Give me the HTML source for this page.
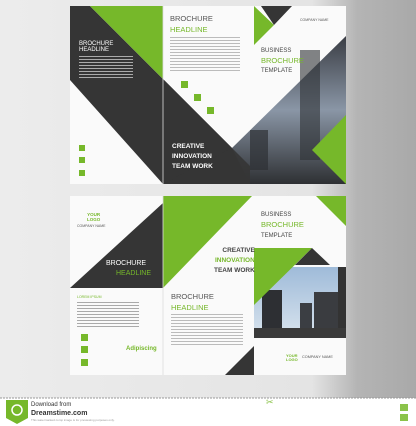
<!DOCTYPE html><html><head><style>
body{margin:0;width:416px;height:426px;overflow:hidden;background:linear-gradient(90deg,#ececec 0%,#e4e4e4 75%,#b4b4b4 86%,#a9a9a9 100%);font-family:"Liberation Sans",sans-serif;position:relative}
.t{position:absolute;white-space:nowrap;line-height:1}
.ln{position:absolute;height:1.5px;background:#bbb}
</style></head><body>
<svg width="416" height="426" style="position:absolute;left:0;top:0">
<defs>
<linearGradient id="ph" x1="0" y1="0" x2="0" y2="1"><stop offset="0" stop-color="#3a3d44"/><stop offset=".5" stop-color="#8a96a6"/><stop offset="1" stop-color="#2e3033"/></linearGradient>
<linearGradient id="sky" x1="0" y1="0" x2="0" y2="1"><stop offset="0" stop-color="#9fbbd9"/><stop offset="1" stop-color="#d9e4ee"/></linearGradient>
</defs>
<!-- top brochure -->
<rect x="70" y="6" width="276" height="178" fill="#fafafa"/>
<polygon points="70,6 90,6 163,79 250,166 250,184 163,184 70,80" fill="#353535"/>
<polygon points="90,6 163,6 163,79" fill="#76b82a"/>
<polygon points="163,79 250,166 250,184 163,184" fill="#353535"/>
<polygon points="346,36 232,148 250,184 346,184" fill="url(#ph)"/>
<rect x="300" y="50" width="20" height="110" fill="#2f3236" opacity=".6"/>
<rect x="250" y="130" width="18" height="40" fill="#2d3034" opacity=".7"/>
<polygon points="312,150 346,115 346,184" fill="#76b82a"/>
<polygon points="232,148 250,166 250,184 163,184" fill="#353535" opacity=".9"/>
<polygon points="254,6 254,45 274,25" fill="#76b82a"/>
<polygon points="261,6 292,6 274,25" fill="#353535"/>
<line x1="163" y1="6" x2="163" y2="184" stroke="#ddd" stroke-width=".8"/>
<!-- bottom brochure -->
<rect x="70" y="196" width="276" height="179" fill="#fafafa"/>
<polygon points="163,203 163,288 70,288" fill="#353535"/>
<polygon points="163,196 252,196 163,288" fill="#76b82a"/>
<polygon points="225,375 254,346 254,375" fill="#353535"/>
<polygon points="316,196 346,196 346,226" fill="#76b82a"/>
<rect x="254" y="267" width="92" height="71" fill="url(#sky)"/>
<rect x="262" y="290" width="20" height="48" fill="#2d2f33"/>
<rect x="300" y="303" width="12" height="35" fill="#3b3e43"/>
<rect x="314" y="292" width="24" height="46" fill="#3a3c40"/>
<rect x="338" y="267" width="8" height="71" fill="#333"/>
<rect x="254" y="328" width="92" height="10" fill="#3a3a3a"/>
<polygon points="254,248 312,248 254,305" fill="#76b82a"/>
<polygon points="295,265 312,248 330,265" fill="#353535"/>
<line x1="163" y1="196" x2="163" y2="375" stroke="#ddd" stroke-width=".8"/>
<!-- footer -->
<rect x="0" y="398" width="416" height="28" fill="#fff"/>
<line x1="0" y1="398" x2="416" y2="398" stroke="#999" stroke-dasharray="2,1"/>
<polygon points="6,400 28,400 28,418 17,424 6,418" fill="#76b82a"/>
<circle cx="17" cy="410" r="5" fill="none" stroke="#fff" stroke-width="1.5"/>
<rect x="400" y="404" width="8" height="7" fill="#8bc34a"/>
<rect x="400" y="414" width="8" height="7" fill="#8bc34a"/>
</svg>
<!-- top texts -->
<div class="t" style="left:79px;top:41px;font-size:6px;color:#fff">BROCHURE<br>HEADLINE</div>
<div style="position:absolute;left:79px;top:56px;width:54px;height:24px;background:repeating-linear-gradient(#aaa 0 1px,transparent 1px 3px)"></div>
<div class="t" style="left:170px;top:15px;font-size:7.5px;color:#555">BROCHURE</div>
<div class="t" style="left:170px;top:26px;font-size:7.5px;color:#76b82a">HEADLINE</div>
<div style="position:absolute;left:170px;top:37px;width:70px;height:36px;background:repeating-linear-gradient(#bbb 0 1px,transparent 1px 3px)"></div>
<div style="position:absolute;left:181px;top:81px;width:7px;height:7px;background:#76b82a"></div>
<div style="position:absolute;left:194px;top:94px;width:7px;height:7px;background:#76b82a"></div>
<div style="position:absolute;left:207px;top:107px;width:7px;height:7px;background:#76b82a"></div>
<div style="position:absolute;left:79px;top:145px;width:6px;height:6px;background:#76b82a"></div>
<div style="position:absolute;left:79px;top:157px;width:6px;height:6px;background:#76b82a"></div>
<div style="position:absolute;left:79px;top:170px;width:6px;height:6px;background:#76b82a"></div>
<div class="t" style="left:172px;top:142px;font-size:6.5px;font-weight:bold;color:#fff;line-height:10px">CREATIVE<br>INNOVATION<br>TEAM WORK</div>
<div class="t" style="left:300px;top:19px;font-size:3.5px;color:#555">COMPANY NAME</div>
<div class="t" style="left:261px;top:48px;font-size:6px;color:#444">BUSINESS</div>
<div class="t" style="left:261px;top:57px;font-size:7.5px;color:#76b82a">BROCHURE</div>
<div class="t" style="left:261px;top:68px;font-size:6px;color:#444">TEMPLATE</div>
<!-- bottom texts -->
<div class="t" style="left:87px;top:213px;font-size:4.5px;font-weight:bold;color:#76b82a;text-align:center">YOUR<br>LOGO</div>
<div class="t" style="left:77px;top:225px;font-size:3.5px;color:#555">COMPANY NAME</div>
<div class="t" style="left:106px;top:260px;font-size:7px;color:#fff">BROCHURE</div>
<div class="t" style="left:116px;top:270px;font-size:7px;color:#76b82a">HEADLINE</div>
<div class="t" style="left:77px;top:296px;font-size:3.5px;color:#76b82a">LOREM IPSUM</div>
<div style="position:absolute;left:77px;top:302px;width:62px;height:26px;background:repeating-linear-gradient(#aaa 0 1px,transparent 1px 3px)"></div>
<div style="position:absolute;left:81px;top:334px;width:7px;height:7px;background:#76b82a"></div>
<div style="position:absolute;left:81px;top:346px;width:7px;height:7px;background:#76b82a"></div>
<div style="position:absolute;left:81px;top:359px;width:7px;height:7px;background:#76b82a"></div>
<div class="t" style="left:126px;top:346px;font-size:6px;font-weight:bold;color:#76b82a">Adipiscing</div>
<div class="t" style="left:214px;top:246px;font-size:6.5px;font-weight:bold;color:#444;line-height:10px;text-align:right">CREATIVE<br><span style="color:#76b82a">INNOVATION</span><br>TEAM WORK</div>
<div class="t" style="left:171px;top:293px;font-size:7.5px;color:#555">BROCHURE</div>
<div class="t" style="left:171px;top:304px;font-size:7.5px;color:#76b82a">HEADLINE</div>
<div style="position:absolute;left:171px;top:314px;width:72px;height:32px;background:repeating-linear-gradient(#bbb 0 1px,transparent 1px 3px)"></div>
<div class="t" style="left:261px;top:212px;font-size:6px;color:#444">BUSINESS</div>
<div class="t" style="left:261px;top:221px;font-size:7.5px;color:#76b82a">BROCHURE</div>
<div class="t" style="left:261px;top:233px;font-size:6px;color:#444">TEMPLATE</div>
<div class="t" style="left:286px;top:354px;font-size:4px;font-weight:bold;color:#76b82a">YOUR<br>LOGO</div>
<div class="t" style="left:302px;top:356px;font-size:3.8px;color:#555">COMPANY NAME</div>
<!-- footer text -->
<div class="t" style="left:31px;top:402px;font-size:6px;color:#333">Download from</div>
<div class="t" style="left:31px;top:410px;font-size:7px;font-weight:bold;color:#333">Dreamstime.com</div>
<div class="t" style="left:31px;top:419px;font-size:3px;color:#999">This watermarked comp image is for previewing purposes only.</div>
<div class="t" style="left:266px;top:398px;font-size:9px;color:#8bc34a">✂</div>
</body></html>
